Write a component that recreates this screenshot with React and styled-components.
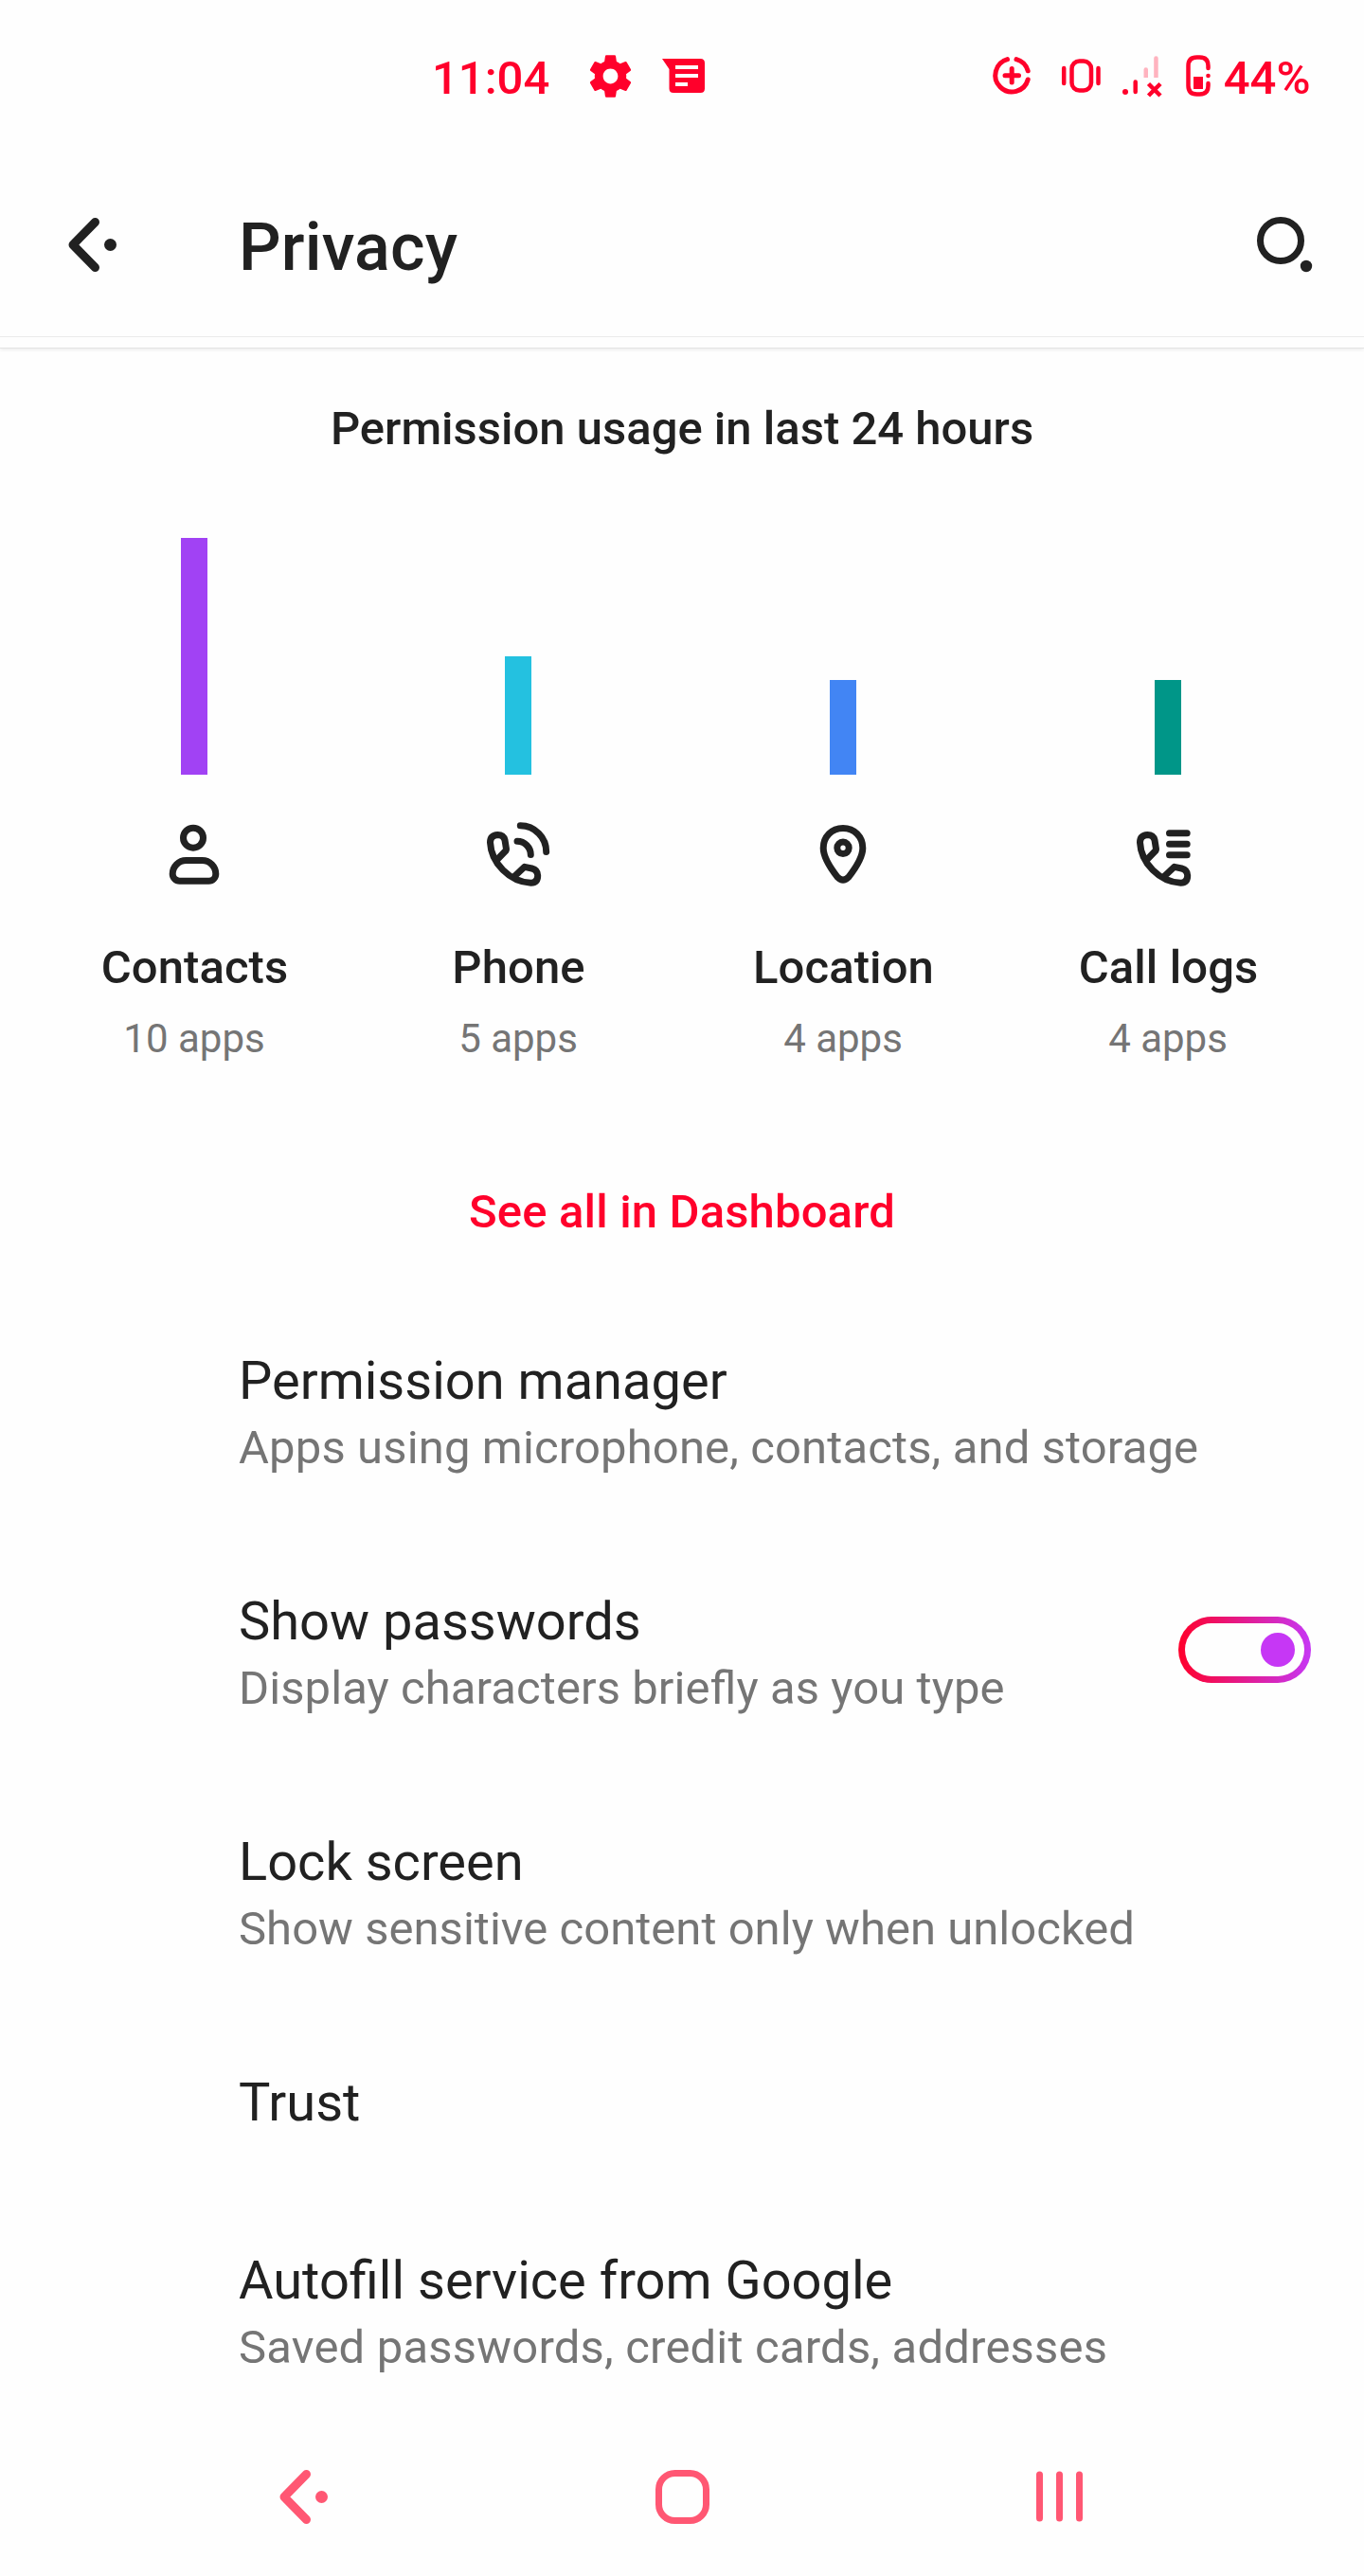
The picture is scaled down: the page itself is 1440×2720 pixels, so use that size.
import React from "react";
import styled, { createGlobalStyle } from "styled-components";

const Global = createGlobalStyle`
  *, *::before, *::after { box-sizing: border-box; }
  body { margin: 0; background: #fefefe; }
`;

const ink = "#212121";
const red = "#ff002b";
const navPink = "#ff5773";

const Screen = styled.div`
  width: 1440px;
  height: 2720px;
  display: flex;
  flex-direction: column;
  overflow: hidden;
  background: #fefefe;
  color: ${ink};
  font-family: Roboto, "Noto Sans", sans-serif;
`;

const StatusBar = styled.header`
  flex: none;
  height: 162px;
  padding: 0 56.5px 2px 456px;
  display: flex;
  align-items: center;
  justify-content: space-between;
  color: ${red};
`;

const StatusGroup = styled.div`
  display: flex;
  align-items: center;
`;

const StatusText = styled.span`
  margin-left: ${(p) => p.$gap || 0}px;
  padding-top: 5px;
  font-size: 49px;
  font-weight: 500;
  line-height: 60px;
`;

const Icon = styled.svg`
  display: block;
  flex: none;
  width: ${(p) => p.$w}px;
  height: ${(p) => p.$h}px;
  margin-left: ${(p) => p.$gap || 0}px;
  overflow: visible;
  fill: none;
  stroke: currentColor;
  stroke-width: ${(p) => p.$stroke || 7};
  stroke-linecap: round;
  stroke-linejoin: round;
`;

const AppBar = styled.div`
  flex: none;
  height: 194px;
  padding: 0 54px 0 72px;
  display: flex;
  align-items: center;
  border-bottom: 1px solid #ebebeb;
`;

const Title = styled.h1`
  flex: 1;
  margin: 5px 0 0 129px;
  font-size: 70px;
  font-weight: 500;
  line-height: 82px;
  letter-spacing: 0.15px;
`;

const Divider = styled.div`
  flex: none;
  height: 12px;
  border-bottom: 1px solid #e3e3e3;
  box-shadow: 0 2px 3px rgba(0, 0, 0, 0.06);
`;

const Usage = styled.section`
  flex: none;
  height: 993px;
  display: flex;
  flex-direction: column;
  align-items: center;
`;

const UsageTitle = styled.h2`
  margin: 56px 0 0;
  font-size: 49px;
  font-weight: 500;
  line-height: 58px;
`;

const Chart = styled.div`
  width: 100%;
  margin-top: 86px;
  padding: 0 34px;
  display: grid;
  grid-template-columns: 342px 342px 344px 342px;
`;

const Column = styled.div`
  display: flex;
  flex-direction: column;
  align-items: center;
`;

const BarArea = styled.div`
  height: 250px;
  display: flex;
  align-items: flex-end;
`;

const Bar = styled.div`
  width: 28px;
  height: ${(p) => p.$apps * 25}px;
  background: ${(p) => p.$color};
`;

const ColumnIcon = styled.div`
  height: 84px;
  margin-top: 43px;
`;

const ColumnLabel = styled.div`
  margin-top: 48px;
  padding-left: 1px;
  font-size: 49px;
  font-weight: 500;
  line-height: 58px;
  letter-spacing: 0.1px;
`;

const ColumnCount = styled.div`
  margin-top: 21px;
  font-size: 42px;
  line-height: 50px;
  color: #757575;
`;

const DashboardLink = styled.a`
  margin-top: 129px;
  font-size: 49px;
  font-weight: 500;
  line-height: 58px;
  letter-spacing: 0.15px;
  color: ${red};
`;

const List = styled.main`
  flex: 1 1 0;
  min-height: 0;
  overflow: hidden;
`;

const Row = styled.div`
  height: ${(p) => (p.$single ? 188 : 254)}px;
  padding: 0 56px 0 252px;
  display: flex;
  align-items: center;
  justify-content: space-between;
`;

const RowText = styled.div`
  padding-top: 6px;
`;

const RowTitle = styled.div`
  font-size: 56px;
  line-height: 66px;
`;

const RowSummary = styled.div`
  margin: 9px 0 -1px;
  font-size: 49px;
  line-height: 58px;
  letter-spacing: ${(p) => p.$tracking}px;
  font-feature-settings: "liga" 1;
  color: #757575;
`;

const Toggle = styled.div`
  width: 140px;
  height: 70px;
  padding: 0 10px;
  display: flex;
  align-items: center;
  justify-content: flex-end;
  border: 7px solid transparent;
  border-radius: 35px;
  background:
    linear-gradient(#fefefe, #fefefe) padding-box,
    linear-gradient(90deg, #ff002b, #c637f5) border-box;
`;

const Knob = styled.div`
  width: 36px;
  height: 36px;
  border-radius: 50%;
  background: #c637f5;
`;

const NavBar = styled.nav`
  flex: none;
  height: 168px;
  padding: 0 297px 0 295px;
  display: flex;
  align-items: center;
  justify-content: space-between;
  color: ${navPink};
`;

const GearIcon = () => (
  <Icon $w={51} $h={51} $gap={39} viewBox="1 1 22 22">
    <path
      fill="currentColor"
      stroke="none"
      d="M19.14 12.94c.04-.3.06-.61.06-.94 0-.32-.02-.64-.07-.94l2.03-1.58c.18-.14.23-.41.12-.61l-1.92-3.32c-.12-.22-.37-.29-.59-.22l-2.39.96c-.5-.38-1.03-.7-1.62-.94l-.36-2.54c-.04-.24-.24-.41-.48-.41h-3.84c-.24 0-.43.17-.47.41l-.36 2.54c-.59.24-1.13.57-1.62.94l-2.39-.96c-.22-.08-.47 0-.59.22L2.74 8.87c-.12.21-.08.47.12.61l2.03 1.58c-.05.3-.09.63-.09.94s.02.64.07.94l-2.03 1.58c-.18.14-.23.41-.12.61l1.92 3.32c.12.22.37.29.59.22l2.39-.96c.5.38 1.03.7 1.62.94l.36 2.54c.05.24.24.41.48.41h3.84c.24 0 .44-.17.47-.41l.36-2.54c.59-.24 1.13-.56 1.62-.94l2.39.96c.22.08.47 0 .59-.22l1.92-3.32c.12-.22.07-.47-.12-.61l-2.01-1.58zM12 15.4c-1.880 0-3.400-1.520-3.400-3.400s1.520-3.400 3.400-3.400 3.400 1.520 3.400 3.400-1.520 3.400-3.400 3.400z"
    />
  </Icon>
);

const MessageIcon = () => (
  <Icon $w={45} $h={36} $gap={29} viewBox="0 0 45 36">
    <path
      fill="currentColor"
      stroke="none"
      fillRule="evenodd"
      d="M0 0H40.500Q45 0 45 4.500V31.500Q45 36 40.500 36H12Q7.500 36 7.500 31.500V11ZM14 7V11H38V7ZM14 16V20H38V16ZM14 25V29H27V25Z"
    />
  </Icon>
);

const DataSaverIcon = () => (
  <Icon $w={40} $h={40} $stroke={5} viewBox="0 0 40 40">
    <path d="M15.500 2.600A17.500 17.500 0 1 0 37.200 24M25 2.600A17.500 17.500 0 0 1 37.200 14.800" />
    <path d="M20.200 12.500V27M13 19.700H27.500" />
  </Icon>
);

const VibrateIcon = () => (
  <Icon $w={41} $h={36} $gap={33} $stroke={4.5} viewBox="0 0 41 36">
    <path d="M2.200 10V26M38.500 10V26" />
    <rect x="10.500" y="2.500" width="20.500" height="31" rx="8" />
  </Icon>
);

const SignalIcon = () => (
  <Icon $w={41} $h={43} $gap={23} $stroke={4.5} viewBox="0 0 41 43">
    <circle cx="3" cy="38" r="3" fill="currentColor" stroke="none" />
    <path d="M13.700 27.500V38" />
    <path
      fill="#ffb3bf"
      stroke="none"
      d="M22.500 23V14.500a2.200 2.200 0 0 1 4.500 0V23ZM33.200 23V2.500a2.200 2.200 0 0 1 4.500 0V23Z"
    />
    <path strokeLinecap="butt" d="M27.500 29.500L40 42M40 29.500L27.500 42" />
  </Icon>
);

const BatteryIcon = () => (
  <Icon $w={26} $h={44} $gap={26} $stroke={4.5} viewBox="0 0 26 44">
    <path d="M23.500 14V11.500Q23.500 2.500 14.500 2.500H11.500Q2.500 2.500 2.500 11.500V32.500Q2.500 41.500 11.500 41.500H14.500Q23.500 41.500 23.500 32.500V30" />
    <circle cx="23.500" cy="22" r="2.300" fill="currentColor" stroke="none" />
    <rect x="8" y="23" width="10" height="13" fill="currentColor" stroke="none" />
  </Icon>
);

const BackIcon = () => (
  <Icon $w={51} $h={57} $stroke={9} viewBox="0 0 51 57">
    <path d="M28.500 4.500L5 28.500L28.500 52.500" />
    <circle cx="44.500" cy="28.500" r="6.500" fill="currentColor" stroke="none" />
  </Icon>
);

const SearchIcon = () => (
  <Icon $w={59} $h={59} viewBox="0 0 59 59">
    <circle cx="25" cy="25" r="21.500" />
    <circle cx="52" cy="52" r="6.200" fill="currentColor" stroke="none" />
  </Icon>
);

const ContactsIcon = () => (
  <Icon $w={84} $h={84} viewBox="0 0 84 84">
    <circle cx="41" cy="23.700" r="10.500" />
    <path d="M33.500 47.500H50.500A14.300 14.300 0 0 1 64.800 61.800A7.400 7.400 0 0 1 57.400 69.200H26.600A7.400 7.400 0 0 1 19.200 61.800A14.300 14.300 0 0 1 33.500 47.500Z" />
  </Icon>
);

const handset =
  "M20.500 46L29.200 37Q29.600 36.500 29.500 35.500L28 26Q26.500 20.500 20.500 20.500Q12.500 21 12.500 28.500C13.500 50 33 70.500 55.500 71.200Q62.700 71 62.700 63.500Q62.500 57.500 56.500 56L48.800 54.300L38.500 64";

const PhoneIcon = () => (
  <Icon $w={84} $h={84} viewBox="0 0 84 84">
    <path d={handset} />
    <path d="M41 27.300A14.300 14.300 0 0 1 55.300 41.600M44.300 10.800A27.500 27.500 0 0 1 71.700 38.500" />
  </Icon>
);

const LocationIcon = () => (
  <Icon $w={84} $h={84} viewBox="0 0 84 84">
    <path d="M42 13.500C30 13.500 21.200 22.500 21.200 34.500C21.200 45 29 56 36.300 65.300Q42 71 47.700 65.300C55 56 62.800 45 62.800 34.500C62.800 22.500 54 13.500 42 13.500Z" />
    <circle cx="42" cy="34.300" r="6.200" />
  </Icon>
);

const CallLogIcon = () => (
  <Icon $w={84} $h={84} viewBox="0 0 84 84">
    <path d={handset} />
    <path d="M43.500 18.700H62.200M43.500 30.300H62.200M43.500 41.700H62.200" />
  </Icon>
);

const HomeIcon = () => (
  <Icon $w={57} $h={57} viewBox="0 0 57 57">
    <rect x="3.500" y="3.500" width="50" height="50" rx="17" />
  </Icon>
);

const RecentsIcon = () => (
  <Icon $w={49} $h={54} viewBox="0 0 49 54">
    <path d="M3.500 4V50M24.500 4V50M45.500 4V50" />
  </Icon>
);

const usage = [
  { label: "Contacts", apps: 10, color: "#a142f4", Glyph: ContactsIcon },
  { label: "Phone", apps: 5, color: "#24c1e0", Glyph: PhoneIcon },
  { label: "Location", apps: 4, color: "#4285f4", Glyph: LocationIcon },
  { label: "Call logs", apps: 4, color: "#009688", Glyph: CallLogIcon },
];

const settings = [
  { title: "Permission manager", summary: "Apps using microphone, contacts, and storage", tracking: 0.13 },
  { title: "Show passwords", summary: "Display characters briefly as you type", tracking: 0.08, toggle: true },
  { title: "Lock screen", summary: "Show sensitive content only when unlocked", tracking: 0.03 },
  { title: "Trust" },
  { title: "Autofill service from Google", summary: "Saved passwords, credit cards, addresses", tracking: 0.19 },
];

export default function App() {
  return (
    <Screen>
      <Global />
      <StatusBar>
        <StatusGroup>
          <StatusText>11:04</StatusText>
          <GearIcon />
          <MessageIcon />
        </StatusGroup>
        <StatusGroup>
          <DataSaverIcon />
          <VibrateIcon />
          <SignalIcon />
          <BatteryIcon />
          <StatusText $gap={14}>44%</StatusText>
        </StatusGroup>
      </StatusBar>
      <AppBar>
        <BackIcon />
        <Title>Privacy</Title>
        <SearchIcon />
      </AppBar>
      <Divider />
      <Usage>
        <UsageTitle>Permission usage in last 24 hours</UsageTitle>
        <Chart>
          {usage.map(({ label, apps, color, Glyph }) => (
            <Column key={label}>
              <BarArea>
                <Bar $apps={apps} $color={color} />
              </BarArea>
              <ColumnIcon>
                <Glyph />
              </ColumnIcon>
              <ColumnLabel>{label}</ColumnLabel>
              <ColumnCount>{apps} apps</ColumnCount>
            </Column>
          ))}
        </Chart>
        <DashboardLink>See all in Dashboard</DashboardLink>
      </Usage>
      <List>
        {settings.map(({ title, summary, tracking, toggle }) => (
          <Row key={title} $single={!summary}>
            <RowText>
              <RowTitle>{title}</RowTitle>
              {summary && <RowSummary $tracking={tracking}>{summary}</RowSummary>}
            </RowText>
            {toggle && (
              <Toggle>
                <Knob />
              </Toggle>
            )}
          </Row>
        ))}
      </List>
      <NavBar>
        <BackIcon />
        <HomeIcon />
        <RecentsIcon />
      </NavBar>
    </Screen>
  );
}
